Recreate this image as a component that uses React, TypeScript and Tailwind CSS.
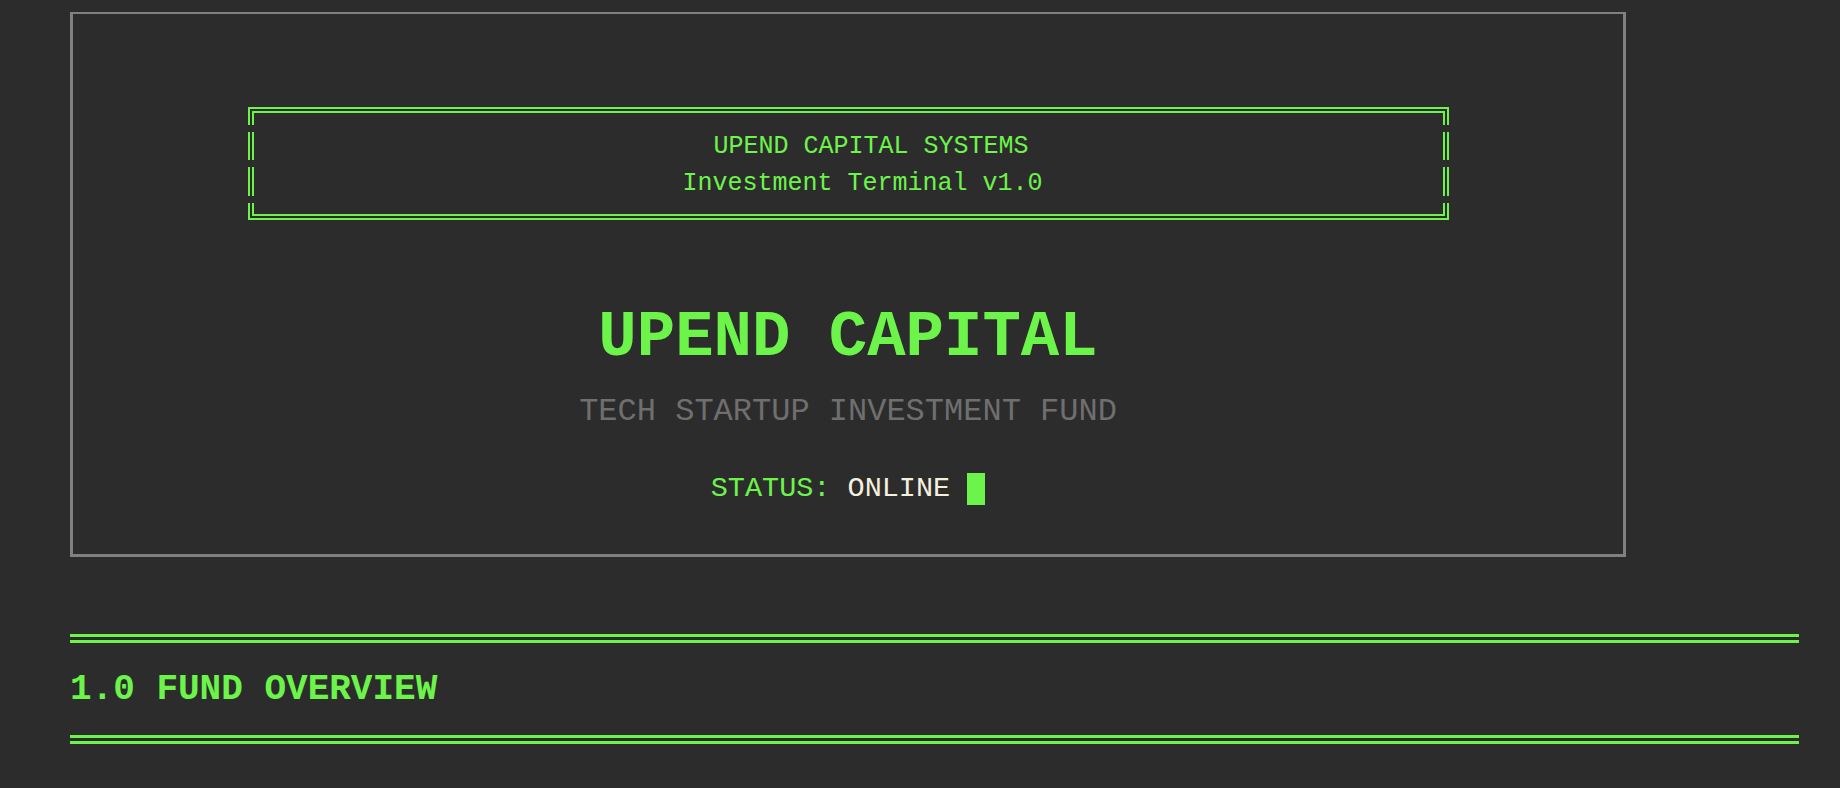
import React from "react";

const mono = { fontFamily: '"Liberation Mono", "Courier New", monospace' };

function GreenBox() {
  return (
    <div className="relative w-[1201px] h-[113px] border-2 border-[#6cf44b] p-[2px]">
      <div className="h-full w-full border-2 border-[#6cf44b] pt-[15px] flex flex-col items-start">
        <div className="ml-[460px] h-[37px] leading-[37px] text-[25px] text-[#6cf44b] whitespace-pre">
          UPEND CAPITAL SYSTEMS
        </div>
        <div className="ml-[429px] h-[37px] leading-[37px] text-[25px] text-[#6cf44b] whitespace-pre">
          Investment Terminal v1.0
        </div>
      </div>
      {/* gaps between stacked ║ glyphs */}
      <div className="absolute left-[-2px] top-[16px] w-[8px] h-[7px] bg-[#2c2c2c]" />
      <div className="absolute left-[-2px] top-[51px] w-[8px] h-[7px] bg-[#2c2c2c]" />
      <div className="absolute left-[-2px] top-[87px] w-[8px] h-[7px] bg-[#2c2c2c]" />
      <div className="absolute right-[-2px] top-[16px] w-[8px] h-[7px] bg-[#2c2c2c]" />
      <div className="absolute right-[-2px] top-[51px] w-[8px] h-[7px] bg-[#2c2c2c]" />
      <div className="absolute right-[-2px] top-[87px] w-[8px] h-[7px] bg-[#2c2c2c]" />
    </div>
  );
}

function DoubleRule() {
  return <div className="w-[1729px] h-[9px] border-y-[3px] border-[#6cf44b]" />;
}

export default function App() {
  return (
    <div className="min-h-[788px] w-full bg-[#2c2c2c] px-[70px] pt-[12px]" style={mono}>
      <div className="w-[1556px] h-[545px] border-[3px] border-t-2 border-[#808080] flex flex-col items-center pt-[93px]">
        <GreenBox />
        <div className="w-full flex flex-col items-center">
          <div className="mt-[86px] h-[64px] leading-[64px] text-[64px] font-bold text-[#6cf44b] whitespace-pre">
            UPEND CAPITAL
          </div>
          <div className="mt-[26px] h-[32px] leading-[32px] text-[32px] text-[#6f6f6f] whitespace-pre">
            TECH STARTUP INVESTMENT FUND
          </div>
          <div className="mt-[45px] flex items-center h-[32px]">
            <span className="leading-[28px] text-[28.5px] text-[#6cf44b] whitespace-pre">STATUS: </span>
            <span className="leading-[28px] text-[28.5px] text-[#f4efdf] whitespace-pre">ONLINE </span>
            <span className="inline-block w-[18px] h-[32px] bg-[#6cf44b]" />
          </div>
        </div>
      </div>
      <div className="mt-[77px]">
        <DoubleRule />
        <div className="mt-[29px] h-[36px] leading-[36px] text-[36px] font-bold text-[#6cf44b] whitespace-pre">
          1.0 FUND OVERVIEW
        </div>
        <div className="mt-[27px]">
          <DoubleRule />
        </div>
      </div>
    </div>
  );
}
